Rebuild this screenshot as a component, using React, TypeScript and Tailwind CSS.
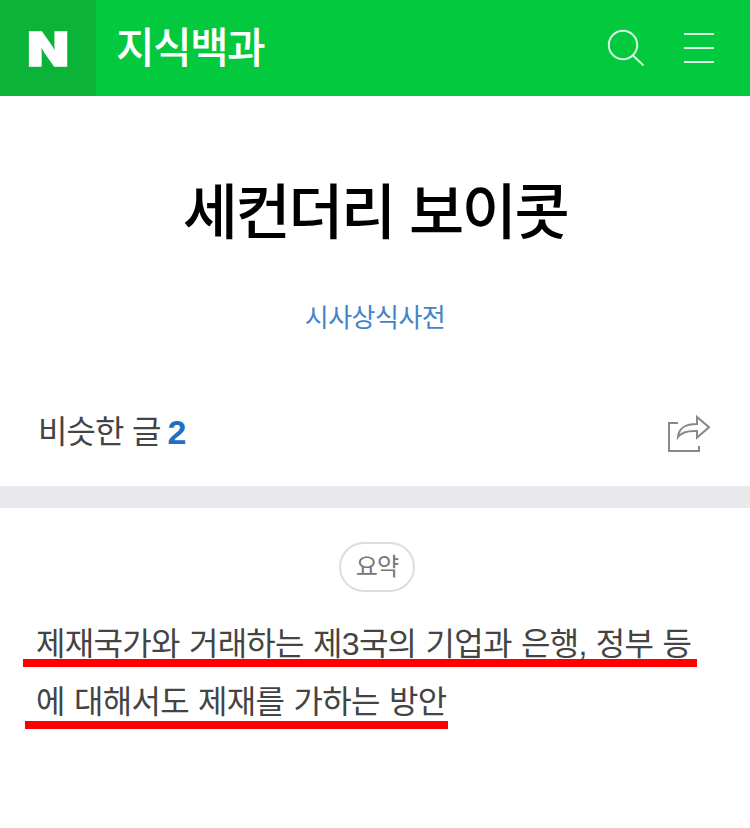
import React from 'react';

const SearchIcon = () => (
  <svg className="h-10 w-10" viewBox="0 0 40 40" fill="none" stroke="currentColor" strokeWidth={2}>
    <circle cx="17" cy="17" r="14.2" />
    <path d="M27 27.500L37.500 37.500" />
  </svg>
);

const MenuIcon = () => (
  <svg className="h-8 w-8" viewBox="0 0 32 32" fill="none" stroke="currentColor" strokeWidth={2}>
    <path d="M1 2H31M1 16H31M1 30H31" />
  </svg>
);

const ShareIcon = () => (
  <svg className="h-10 w-11" viewBox="0 0 44 40" fill="none" stroke="currentColor" strokeWidth={2}>
    <path d="M12 11H3V39H33V34" />
    <path d="M31 5V12C20 12 13 15 12 25C16 19.500 22 18.500 31 19V25.500L43 15.300Z" />
  </svg>
);

const summaryLines = [
  { text: '제재국가와 거래하는 제3국의 기업과 은행, 정부 등', row: 'h-[40px]', bar: 'ml-[23px] w-[674px]' },
  { text: '에 대해서도 제재를 가하는 방안', row: 'mt-[10px] h-[44px]', bar: 'ml-[25px] w-[423px]' },
];

const App = () => {
  return (
    <div className="min-h-screen w-full bg-white font-['Noto_Sans_CJK_KR',sans-serif]">
      {/* Header */}
      <header className="flex h-24 items-center bg-[#03c93f] text-white">
        <div className="flex h-24 w-24 items-center justify-center bg-[#0bb339]">
          <span className="scale-x-115 font-['Inter',sans-serif] text-[47px] leading-none font-black [-webkit-text-stroke:1.5px_white]">
            N
          </span>
        </div>
        <h1 className="mb-[6px] ml-5 flex-1 text-[42px] leading-[60px] font-medium tracking-[-1.6px]">지식백과</h1>
        <button type="button" className="text-[#d9f7e1]">
          <SearchIcon />
        </button>
        <button type="button" className="mr-[35px] ml-[37px] text-[#d9f7e1]">
          <MenuIcon />
        </button>
      </header>

      {/* Title */}
      <section className="h-[390px] pt-[67px]">
        <h2 className="text-center text-[60px] leading-[90px] font-medium tracking-[-2.4px] text-black [word-spacing:4px]">
          세컨더리 보이콧
        </h2>
        <p className="mt-[43px] text-center text-[26px] leading-[40px] font-normal tracking-[-0.5px] text-[#4383c9]">
          시사상식사전
        </p>
        <div className="mt-[71px] flex h-[50px] items-center justify-between pr-[40px] pl-[38px]">
          <div className="flex items-center text-[32px] leading-[50px] font-normal tracking-[-0.9px] text-[#444]">
            <span className="mb-[7px] [word-spacing:2px]">비슷한 글</span>
            <span className="ml-[7px] font-['Liberation_Sans',sans-serif] text-[34px] font-bold text-[#1f70c1]">2</span>
          </div>
          <span className="text-[#888]">
            <ShareIcon />
          </span>
        </div>
      </section>

      <div className="h-[22px] bg-[#e8e9ed]" />

      {/* Summary */}
      <section className="pt-[34px]">
        <div className="ml-[339px] flex h-[50px] w-[76px] items-center justify-center rounded-full border-2 border-[#ddd] pb-[5px] text-[24px] leading-none font-normal tracking-[-0.8px] text-[#777]">
          요약
        </div>
        <div className="mt-[27px]">
          {summaryLines.map((line) => (
            <div key={line.text}>
              <p
                className={`pl-9 font-['Liberation_Sans','Noto_Sans_CJK_KR',sans-serif] text-[32px] leading-[50px] font-normal tracking-[-0.7px] whitespace-nowrap text-[#444] [word-spacing:1px] ${line.row}`}
              >
                {line.text}
              </p>
              <div className={`relative h-2 bg-[#ff0000] ${line.bar}`} />
            </div>
          ))}
        </div>
      </section>
    </div>
  );
};

export default App;
